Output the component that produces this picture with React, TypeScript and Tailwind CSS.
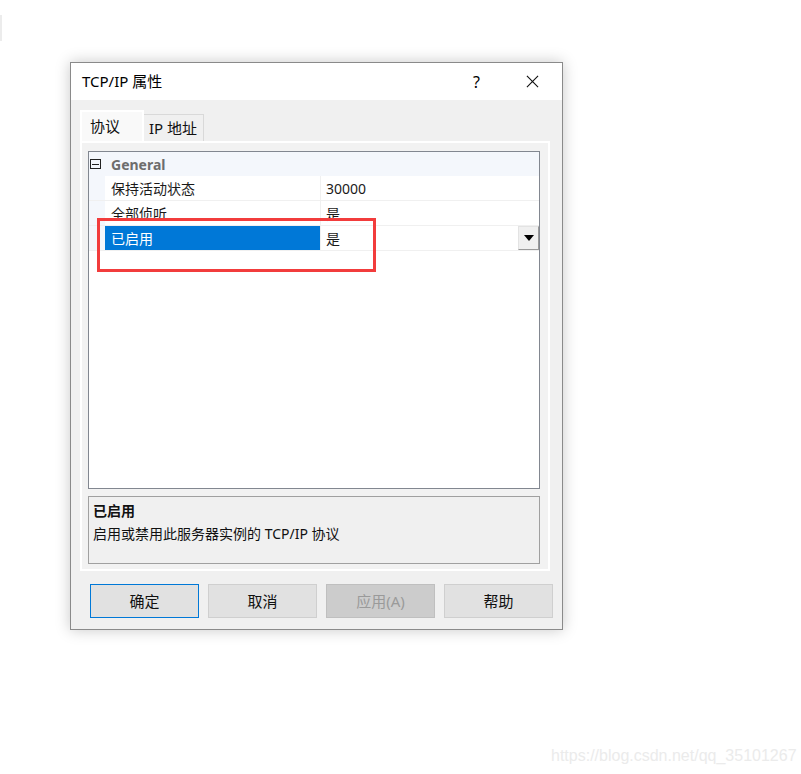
import React from "react";

const ui = { fontFamily: '"Segoe UI", "Noto Sans", "Noto Sans CJK SC", sans-serif' };

type Row = { name: string; value: string; selected?: boolean };

const rows: Row[] = [
  { name: "保持活动状态", value: "30000" },
  { name: "全部侦听", value: "是" },
  { name: "已启用", value: "是", selected: true },
];

function PropertyRow({ row }: { row: Row }) {
  return (
    <div className="flex h-[25px] border-b border-[#f0f0f0]">
      <div className="w-[16px] shrink-0 bg-[#f4f7fc]" />
      <div
        className={
          row.selected
            ? "flex w-[216px] shrink-0 items-center border-r border-[#f0f0f0] bg-[#0078d7] pl-[6px] text-white"
            : "flex w-[216px] shrink-0 items-center border-r border-[#f0f0f0] pl-[6px] text-[#1a1a1a]"
        }
      >
        {row.name}
      </div>
      <div className="flex flex-1 items-center justify-between pl-[5px] text-[#1a1a1a]">
        <span>{row.value}</span>
        {row.selected && (
          <span className="flex h-[24px] w-[21px] items-center justify-center border border-[#e3e3e3] border-r-[#9a9a9a] border-b-[#9a9a9a] bg-[#f0f0f0]">
            <svg width="10" height="6" viewBox="0 0 10 6">
              <path d="M0 0h10L5 6z" fill="#000" />
            </svg>
          </span>
        )}
      </div>
    </div>
  );
}

function DialogButton({ label, primary, disabled }: { label: string; primary?: boolean; disabled?: boolean }) {
  const cls = primary
    ? "border-[#0078d7] bg-[#e1e1e1] text-[#111]"
    : disabled
      ? "border-[#bfbfbf] bg-[#cccccc] text-[#9a9a9a]"
      : "border-[#cfcfcf] bg-[#e1e1e1] text-[#111]";
  return (
    <button className={`flex h-[34px] w-[109px] items-center justify-center border text-[15px] ${cls}`}>
      {label}
    </button>
  );
}

export default function App() {
  return (
    <div className="relative h-[774px] w-[801px] overflow-hidden bg-white" style={ui}>
      <div className="absolute left-0 top-[15px] h-[26px] w-[2px] bg-[#ececec]" />

      <div className="pl-[70px] pt-[62px]">
        <div className="w-[493px] border border-[#8a8a8a] bg-[#f0f0f0] shadow-[0_0_14px_rgba(0,0,0,0.22)]">
          {/* title bar */}
          <div className="flex h-[37px] items-center bg-white pl-[11px] pr-[23px] text-[15px] text-black">
            <span className="flex-1">TCP/IP 属性</span>
            <span className="mr-[46px] text-[16px]">?</span>
            <svg width="13" height="13" viewBox="0 0 14 14">
              <path d="M1 1l12 12M13 1L1 13" stroke="#111" strokeWidth="1.2" />
            </svg>
          </div>

          <div className="px-[9px] pb-[11px] pt-[12px]">
            {/* tabs */}
            <div className="flex h-[29px] items-end">
              <div className="relative z-10 flex h-[31px] w-[64px] items-center border-x-2 border-t-2 border-white bg-[#f9f9f9] pl-[8px] text-[15px] text-[#111]">
                协议
              </div>
              <div className="flex h-[27px] w-[60px] items-center border-r border-t border-[#d9d9d9] bg-[#f0f0f0] pl-[5px] text-[15px] text-[#111]">
                IP 地址
              </div>
            </div>

            {/* tab page */}
            <div className="h-[430px] w-[470px] border-2 border-white bg-[#f2f2f2] pl-[6px] pr-[8px] pt-[8px]">
              <div className="h-[338px] border border-[#828790] bg-white text-[14px]">
                <div className="flex h-[24px] items-center bg-[#f4f7fc]">
                  <span className="ml-[1px] flex h-[10px] w-[11px] items-center justify-center border border-[#222]">
                    <span className="h-[1px] w-[7px] bg-[#222]" />
                  </span>
                  <span className="ml-[10px] font-bold text-[#6d6d6d]">General</span>
                </div>
                {rows.map((r) => (
                  <PropertyRow key={r.name} row={r} />
                ))}
              </div>

              <div className="mt-[7px] h-[68px] border border-[#a0a0a0] bg-[#f0f0f0] px-[4px] pt-[3px] text-[14px] text-[#111]">
                <div className="font-bold">已启用</div>
                <div className="mt-[2px]">启用或禁用此服务器实例的 TCP/IP 协议</div>
              </div>
            </div>

            {/* buttons */}
            <div className="ml-[10px] mt-[13px] flex gap-[9px]">
              <DialogButton label="确定" primary />
              <DialogButton label="取消" />
              <DialogButton label="应用(A)" disabled />
              <DialogButton label="帮助" />
            </div>
          </div>
        </div>
      </div>

      {/* annotation */}
      <div className="absolute left-[97px] top-[218px] h-[54px] w-[279px] border-[3px] border-[#f23c3c]" />

      <div
        className="absolute left-[551px] top-[744px] text-[16px] text-[#ebebeb]"
        style={{ fontFamily: '"Liberation Sans", Arial, sans-serif' }}
      >
        https://blog.csdn.net/qq_35101267
      </div>
    </div>
  );
}
